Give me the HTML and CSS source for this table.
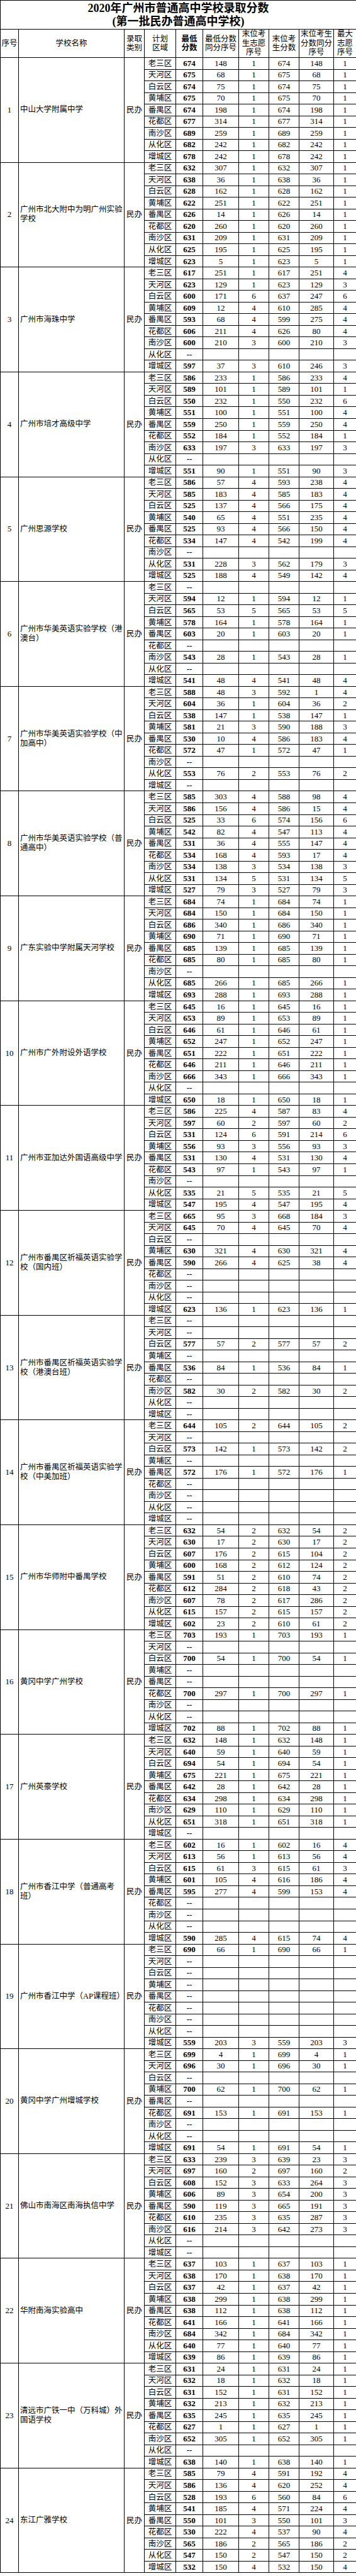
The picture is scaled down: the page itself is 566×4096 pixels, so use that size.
FILE: index.html
```html
<!DOCTYPE html>
<html lang="zh-CN">
<head>
<meta charset="utf-8">
<title>2020年广州市普通高中学校录取分数</title>
<link rel="stylesheet" href="styles.css">
</head>
<body>
<table class="sheet">
  <colgroup>
    <col class="c-seq"><col class="c-name"><col class="c-kind"><col class="c-dist"><col class="c-min">
    <col class="c-minrank"><col class="c-wish"><col class="c-last"><col class="c-lastrank"><col class="c-max">
  </colgroup>
  <thead>
    <tr class="title-row">
      <th colspan="10">2020年广州市普通高中学校录取分数<br>(第一批民办普通高中学校)</th>
    </tr>
    <tr class="head-row">
      <th>序号</th>
      <th>学校名称</th>
      <th>录取<br>类别</th>
      <th>计划<br>区域</th>
      <th class="bold">最低<br>分数</th>
      <th>最低分数<br>同分序号</th>
      <th>末位考<br>生志愿<br>序号</th>
      <th>末位考<br>生分数</th>
      <th>末位考生<br>分数同分<br>序号</th>
      <th>最大<br>志愿<br>序号</th>
    </tr>
  </thead>
  <tbody id="rows"></tbody>
</table>
<script src="script.js"></script>
</body>
</html>
```

FILE: styles.css
```css
html, body {
  margin: 0;
  padding: 0;
  background: #fff;
}
body {
  font-family: "Liberation Serif", "Noto Sans CJK SC", serif;
  color: #000;
}
.sheet {
  width: 566px;
  border-collapse: collapse;
  table-layout: fixed;
}
.c-seq { width: 29px; }
.c-name { width: 168px; }
.c-kind { width: 32px; }
.c-dist { width: 50px; }
.c-min { width: 43px; }
.c-minrank { width: 57px; }
.c-wish { width: 48px; }
.c-last { width: 48px; }
.c-lastrank { width: 55px; }
.c-max { width: 36px; }

.sheet th,
.sheet td {
  border: 1px solid #000;
  padding: 0;
  text-align: center;
  vertical-align: middle;
  font-weight: normal;
  overflow: hidden;
  white-space: nowrap;
}
.title-row th {
  height: 45px;
  font-size: 18px;
  line-height: 21px;
  font-weight: bold;
}
.head-row th {
  height: 44px;
  font-size: 12.5px;
  line-height: 14.5px;
}
.head-row th.bold {
  font-weight: bold;
}
.sheet tbody tr {
  height: 18.53px;
}
.sheet tbody td {
  font-size: 13px;
  line-height: 14px;
}
.sheet td.seq {
  font-size: 13px;
}
.sheet td.name {
  text-align: left;
  padding-left: 2px;
  font-size: 12.5px;
  line-height: 15px;
  white-space: normal;
  word-break: break-all;
}
.sheet td.kind,
.sheet td.dist {
  font-size: 12.5px;
}
.sheet td.min {
  font-weight: bold;
}
```

FILE: script.js
```js
var DISTRICTS = ["老三区", "天河区", "白云区", "黄埔区", "番禺区", "花都区", "南沙区", "从化区", "增城区"];
var SCHOOLS = [
  ["中山大学附属中学", "674 148 1 674 148 1,675 68 1 675 68 1,674 75 1 674 75 1,675 70 1 675 70 1,674 198 1 674 198 1,677 314 1 677 314 1,689 259 1 689 259 1,682 242 1 682 242 1,678 242 1 678 242 1"],
  ["广州市北大附中为明广州实验学校", "632 307 1 632 307 1,638 36 1 638 36 1,628 162 1 628 162 1,622 251 1 622 251 1,626 14 1 626 14 1,620 260 1 620 260 1,631 209 1 631 209 1,625 195 1 625 195 1,623 5 1 623 5 1"],
  ["广州市海珠中学", "617 251 1 617 251 4,623 129 1 623 129 3,600 171 6 637 247 6,609 12 4 610 285 4,593 68 4 599 275 4,606 211 4 626 80 4,600 210 3 600 210 3,-,597 37 3 610 246 3"],
  ["广州市培才高级中学", "586 233 1 586 233 4,589 101 1 589 101 1,550 232 1 550 232 6,551 100 1 551 100 4,559 250 1 559 250 4,552 184 1 552 184 1,633 197 3 633 197 3,-,551 90 1 551 90 3"],
  ["广州思源学校", "586 57 4 593 238 4,585 183 4 585 183 4,525 137 4 566 175 4,540 65 4 551 235 4,525 93 4 566 150 4,534 147 4 542 199 4,-,531 228 3 562 179 3,525 188 4 549 142 4"],
  ["广州市华美英语实验学校（港澳台）", "-,594 12 1 594 12 1,565 53 5 565 53 5,578 164 1 578 164 1,603 20 1 603 20 1,-,543 28 1 543 28 1,-,541 48 4 541 48 4"],
  ["广州市华美英语实验学校（中加高中）", "588 48 3 592 1 4,604 36 1 604 36 2,538 147 1 538 147 1,581 21 3 590 188 3,530 10 4 586 183 4,572 47 1 572 47 1,-,553 76 2 553 76 2,-"],
  ["广州市华美英语实验学校（普通高中）", "585 303 4 588 98 4,586 156 4 586 15 4,525 33 6 574 156 6,542 82 4 547 113 4,531 36 4 555 147 4,534 168 4 593 17 4,534 138 3 534 138 3,531 134 5 531 134 5,527 79 3 527 79 3"],
  ["广东实验中学附属天河学校", "684 74 1 684 74 1,684 150 1 684 150 1,686 340 1 686 340 1,690 71 1 690 71 1,685 139 1 685 139 1,685 80 1 685 80 1,-,685 266 1 685 266 1,693 288 1 693 288 1"],
  ["广州市广外附设外语学校", "645 16 1 645 16 1,653 89 1 653 89 1,646 61 1 646 61 1,652 247 1 652 247 1,651 222 1 651 222 1,646 211 1 646 211 1,666 343 1 666 343 1,-,650 18 1 650 18 1"],
  ["广州市亚加达外国语高级中学", "586 225 4 587 83 4,597 60 2 597 60 2,531 124 6 591 214 6,556 93 3 556 93 3,531 130 4 531 130 4,543 97 1 543 97 1,-,535 21 5 535 21 5,547 195 4 547 195 4"],
  ["广州市番禺区祈福英语实验学校（国内班）", "665 95 3 668 184 3,645 70 4 645 70 4,-,630 321 4 630 321 4,590 266 4 625 38 4,-,-,-,623 136 1 623 136 1"],
  ["广州市番禺区祈福英语实验学校（港澳台班）", "-,-,577 57 2 577 57 2,-,536 84 1 536 84 1,-,582 30 2 582 30 2,-,-"],
  ["广州市番禺区祈福英语实验学校（中美加班）", "644 105 2 644 105 2,-,573 142 1 573 142 2,-,572 176 1 572 176 1,-,-,-,-"],
  ["广州市华师附中番禺学校", "632 54 2 632 54 2,630 17 2 630 17 2,607 176 2 615 104 2,600 168 2 612 124 2,591 51 2 610 74 2,612 284 2 618 43 2,607 78 2 617 286 2,615 157 2 615 157 2,602 23 2 610 61 2"],
  ["黄冈中学广州学校", "703 193 1 703 193 1,-,700 54 1 700 54 1,-,-,700 297 1 700 297 1,-,-,702 88 1 702 88 1"],
  ["广州英豪学校", "632 148 1 632 148 1,640 59 1 640 59 1,694 54 1 694 54 1,675 221 1 675 221 1,642 28 1 642 28 1,634 298 1 634 298 1,629 110 1 629 110 1,651 318 1 651 318 1,-"],
  ["广州市香江中学（普通高考班）", "602 16 1 602 16 4,613 56 1 613 56 4,615 61 3 615 61 3,601 105 4 616 186 4,595 277 4 599 153 4,-,-,-,590 285 4 615 74 4"],
  ["广州市香江中学（AP课程班）", "690 66 1 690 66 1,-,-,-,-,-,-,-,559 203 3 559 203 3"],
  ["黄冈中学广州增城学校", "699 4 1 699 4 1,696 30 1 696 30 1,-,700 62 1 700 62 1,-,691 153 1 691 153 1,-,-,691 54 1 691 54 1"],
  ["佛山市南海区南海执信中学", "633 239 3 639 23 3,697 160 2 697 160 2,608 152 3 633 264 3,606 89 3 654 200 3,590 119 3 665 191 3,610 235 3 635 287 3,616 214 3 642 273 3,-,-"],
  ["华附南海实验高中", "637 103 1 637 103 1,638 170 1 638 170 1,637 42 1 637 42 1,638 299 1 638 299 1,638 112 1 638 112 1,641 166 1 641 166 1,684 342 1 684 342 1,640 77 1 640 77 1,639 86 1 639 86 1"],
  ["清远市广铁一中（万科城）外国语学校", "631 24 1 631 24 1,632 18 1 632 18 1,631 152 1 631 152 1,632 213 1 632 213 1,635 245 1 635 245 1,627 1 1 627 1 1,652 305 1 652 305 1,-,638 140 1 638 140 1"],
  ["东江广雅学校", "585 79 4 591 192 4,586 136 4 620 252 4,528 193 6 560 84 6,541 185 4 571 224 4,550 101 3 550 101 3,530 222 4 537 90 4,565 186 2 565 186 2,547 150 2 547 150 2,532 150 4 532 150 4"]
];

(function () {
  var html = "";
  SCHOOLS.forEach(function (school, i) {
    var rows = school[1].split(",");
    rows.forEach(function (r, j) {
      html += "<tr>";
      if (j === 0) {
        html += '<td class="seq" rowspan="9">' + (i + 1) + "</td>";
        html += '<td class="name" rowspan="9">' + school[0] + "</td>";
        html += '<td class="kind" rowspan="9">民办</td>';
      }
      html += '<td class="dist">' + DISTRICTS[j] + "</td>";
      if (r === "-") {
        html += '<td class="min">--</td><td></td><td></td><td></td><td></td><td></td>';
      } else {
        var v = r.split(" ");
        html += '<td class="min">' + v[0] + "</td>";
        for (var k = 1; k < 6; k++) {
          html += "<td>" + v[k] + "</td>";
        }
      }
      html += "</tr>";
    });
  });
  document.getElementById("rows").innerHTML = html;
})();
```
